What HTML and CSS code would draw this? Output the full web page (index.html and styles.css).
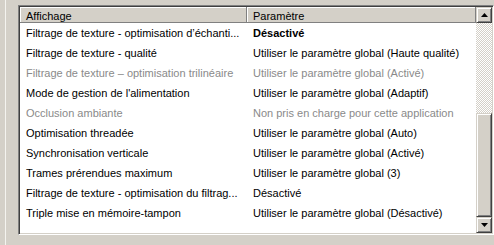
FILE: index.html
```html
<!DOCTYPE html>
<html lang="fr">

<head>
    <meta charset="UTF-8">
    <title>Paramètres 3D</title>
    <link rel="stylesheet" href="styles.css">
</head>

<body>
    <div class="panel">
        <div class="listview">
            <div class="list">
                <div class="head">
                    <div class="head-cell col-name">Affichage</div>
                    <div class="head-cell col-value">Paramètre</div>
                </div>
                <div class="row">
                    <div class="col-name">Filtrage de texture - optimisation d’échanti...</div>
                    <div class="col-value bold">Désactivé</div>
                </div>
                <div class="row">
                    <div class="col-name">Filtrage de texture - qualité</div>
                    <div class="col-value">Utiliser le paramètre global (Haute qualité)</div>
                </div>
                <div class="row disabled">
                    <div class="col-name">Filtrage de texture – optimisation trilinéaire</div>
                    <div class="col-value">Utiliser le paramètre global (Activé)</div>
                </div>
                <div class="row">
                    <div class="col-name">Mode de gestion de l'alimentation</div>
                    <div class="col-value">Utiliser le paramètre global (Adaptif)</div>
                </div>
                <div class="row disabled">
                    <div class="col-name">Occlusion ambiante</div>
                    <div class="col-value">Non pris en charge pour cette application</div>
                </div>
                <div class="row">
                    <div class="col-name">Optimisation threadée</div>
                    <div class="col-value">Utiliser le paramètre global (Auto)</div>
                </div>
                <div class="row">
                    <div class="col-name">Synchronisation verticale</div>
                    <div class="col-value">Utiliser le paramètre global (Activé)</div>
                </div>
                <div class="row">
                    <div class="col-name">Trames prérendues maximum</div>
                    <div class="col-value">Utiliser le paramètre global (3)</div>
                </div>
                <div class="row">
                    <div class="col-name">Filtrage de texture - optimisation du filtrag...</div>
                    <div class="col-value">Désactivé</div>
                </div>
                <div class="row">
                    <div class="col-name">Triple mise en mémoire-tampon</div>
                    <div class="col-value">Utiliser le paramètre global (Désactivé)</div>
                </div>
            </div>
            <div class="scrollbar">
                <div class="sb-btn">
                    <svg width="7" height="4" viewBox="0 0 7 4"><polygon points="3.5,0 7,4 0,4" fill="#000"/></svg>
                </div>
                <div class="sb-track">
                    <div class="sb-thumb"></div>
                </div>
                <div class="sb-btn">
                    <svg width="7" height="4" viewBox="0 0 7 4"><polygon points="0,0 7,0 3.5,4" fill="#000"/></svg>
                </div>
            </div>
        </div>
    </div>
</body>

</html>
```

FILE: styles.css
```css
body {
    margin: 0;
    background: #d4d0c8;
    font-family: 'Liberation Sans', Arial, sans-serif;
    font-size: 11px;
    color: #000;
    overflow: hidden;
}

.panel {
    margin-left: 5px;
    height: 245px;
    border-left: 1px solid #f4f3ef;
    padding: 5px 0 0 12px;
    box-sizing: border-box;
}

/* sunken list box */
.listview {
    display: flex;
    height: 230px;
    box-sizing: border-box;
    border: 1px solid;
    border-color: #808080 #fff #fff #808080;
    box-shadow: inset 1px 1px #404040, inset -1px -1px #d4d0c8;
    padding: 1px;
    background: #fff;
}

.list {
    flex: 1;
    overflow: hidden;
}

.head {
    display: flex;
    height: 16px;
    background: #d4d0c8;
}

.head-cell {
    line-height: 16px;
    padding-top: 1px;
    box-sizing: border-box;
    border-right: 1px solid #808080;
    border-bottom: 1px solid #808080;
    box-shadow: inset 1px 1px #fff;
}

.col-name {
    width: 227px;
    padding-left: 6px;
    box-sizing: border-box;
    white-space: nowrap;
    overflow: hidden;
}

.col-value {
    flex: 1;
    padding-left: 6px;
    white-space: nowrap;
    overflow: hidden;
}

.row {
    display: flex;
    height: 20px;
    line-height: 20px;
}

.row:first-of-type {
    margin-top: 0;
}

.bold {
    font-weight: bold;
}

.disabled {
    color: #8a8a8a;
}

/* classic scroll bar */
.scrollbar {
    width: 16px;
    display: flex;
    flex-direction: column;
}

.sb-btn,
.sb-thumb {
    background: #d4d0c8;
    border: 1px solid;
    border-color: #d4d0c8 #404040 #404040 #d4d0c8;
    box-shadow: inset 1px 1px #fff, inset -1px -1px #808080;
    box-sizing: border-box;
}

.sb-btn {
    height: 16px;
    display: flex;
    align-items: center;
    justify-content: center;
}

.sb-track {
    flex: 1;
    display: flex;
    flex-direction: column;
    background: repeating-conic-gradient(#fff 0 25%, #d4d0c8 0 50%) 0 0 / 2px 2px;
}

.sb-thumb {
    margin-top: auto;
    height: 104px;
}
```
